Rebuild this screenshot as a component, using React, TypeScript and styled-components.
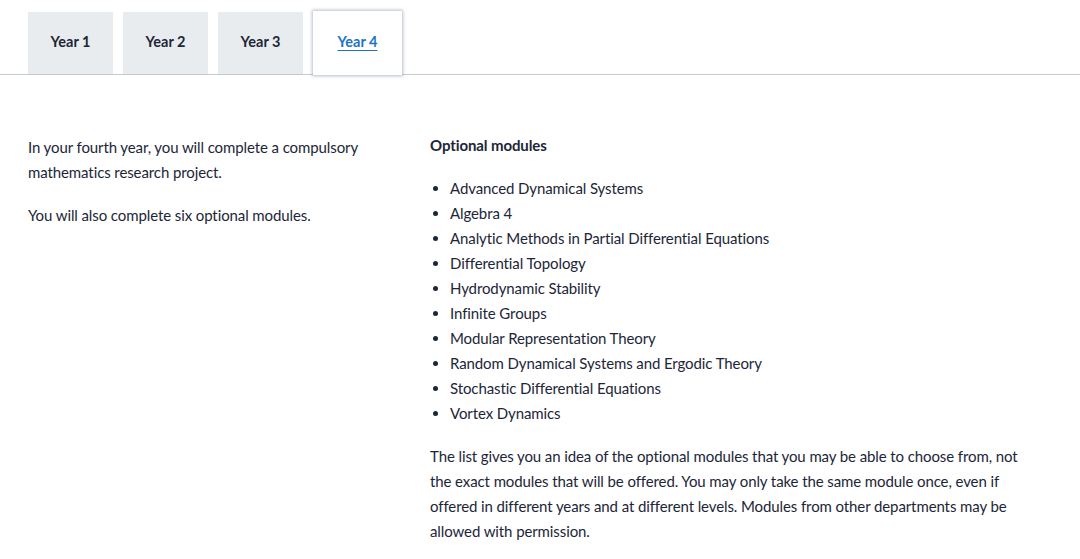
import React from 'react';
import styled, { createGlobalStyle } from 'styled-components';

const GlobalStyle = createGlobalStyle`
  body {
    margin: 0;
    background: #ffffff;
    font-family: Lato, "Open Sans", sans-serif;
    color: #1c2638;
  }
`;

const Page = styled.div`
  width: 1080px;
  height: 559px;
  overflow: hidden;
`;

const TabBar = styled.div`
  display: flex;
  align-items: flex-end;
  gap: 10px;
  padding: 12px 28px 0;
  border-bottom: 1px solid #c5c9d1;
  height: 62px;
`;

const Tab = styled.button<{ $active?: boolean }>`
  width: ${(p) => (p.$active ? '89px' : '85px')};
  height: ${(p) => (p.$active ? '64px' : '62px')};
  margin-bottom: ${(p) => (p.$active ? '-1px' : '0')};
  border: none;
  background: ${(p) => (p.$active ? '#ffffff' : '#e9ecee')};
  box-shadow: ${(p) => (p.$active ? '0 0 3px 1px rgba(120, 135, 160, 0.55)' : 'none')};
  font-family: inherit;
  font-size: 14.5px;
  font-weight: 700;
  color: ${(p) => (p.$active ? '#1b74c5' : '#1c2638')};
  text-decoration: ${(p) => (p.$active ? 'underline' : 'none')};
  text-underline-offset: 3px;
  cursor: pointer;
  padding: 0 0 3px;
`;

const Content = styled.div`
  display: grid;
  grid-template-columns: 402px 1fr;
  padding: 60px 28px 0;
  font-size: 15px;
  line-height: 25px;
  letter-spacing: -0.1px;
`;

const Intro = styled.div``;

const Para = styled.p`
  margin: 0 0 18px;
`;

const Heading = styled.h3`
  margin: -2px 0 18px;
  font-size: 15px;
  font-weight: 700;
  line-height: 25px;
`;

const ModuleList = styled.ul`
  margin: 0 0 18px;
  padding-left: 20px;
`;

const modules = [
  'Advanced Dynamical Systems',
  'Algebra 4',
  'Analytic Methods in Partial Differential Equations',
  'Differential Topology',
  'Hydrodynamic Stability',
  'Infinite Groups',
  'Modular Representation Theory',
  'Random Dynamical Systems and Ergodic Theory',
  'Stochastic Differential Equations',
  'Vortex Dynamics',
];

export default function App() {
  return (
    <Page>
      <GlobalStyle />
      <TabBar>
        <Tab>Year 1</Tab>
        <Tab>Year 2</Tab>
        <Tab>Year 3</Tab>
        <Tab $active>Year 4</Tab>
      </TabBar>
      <Content>
        <Intro>
          <Para>
            In your fourth year, you will complete a compulsory
            <br />
            mathematics research project.
          </Para>
          <Para>You will also complete six optional modules.</Para>
        </Intro>
        <div>
          <Heading>Optional modules</Heading>
          <ModuleList>
            {modules.map((m) => (
              <li key={m}>{m}</li>
            ))}
          </ModuleList>
          <Para>
            The list gives you an idea of the optional modules that you may be able to choose from, not
            <br />
            the exact modules that will be offered. You may only take the same module once, even if
            <br />
            offered in different years and at different levels. Modules from other departments may be
            <br />
            allowed with permission.
          </Para>
        </div>
      </Content>
    </Page>
  );
}
